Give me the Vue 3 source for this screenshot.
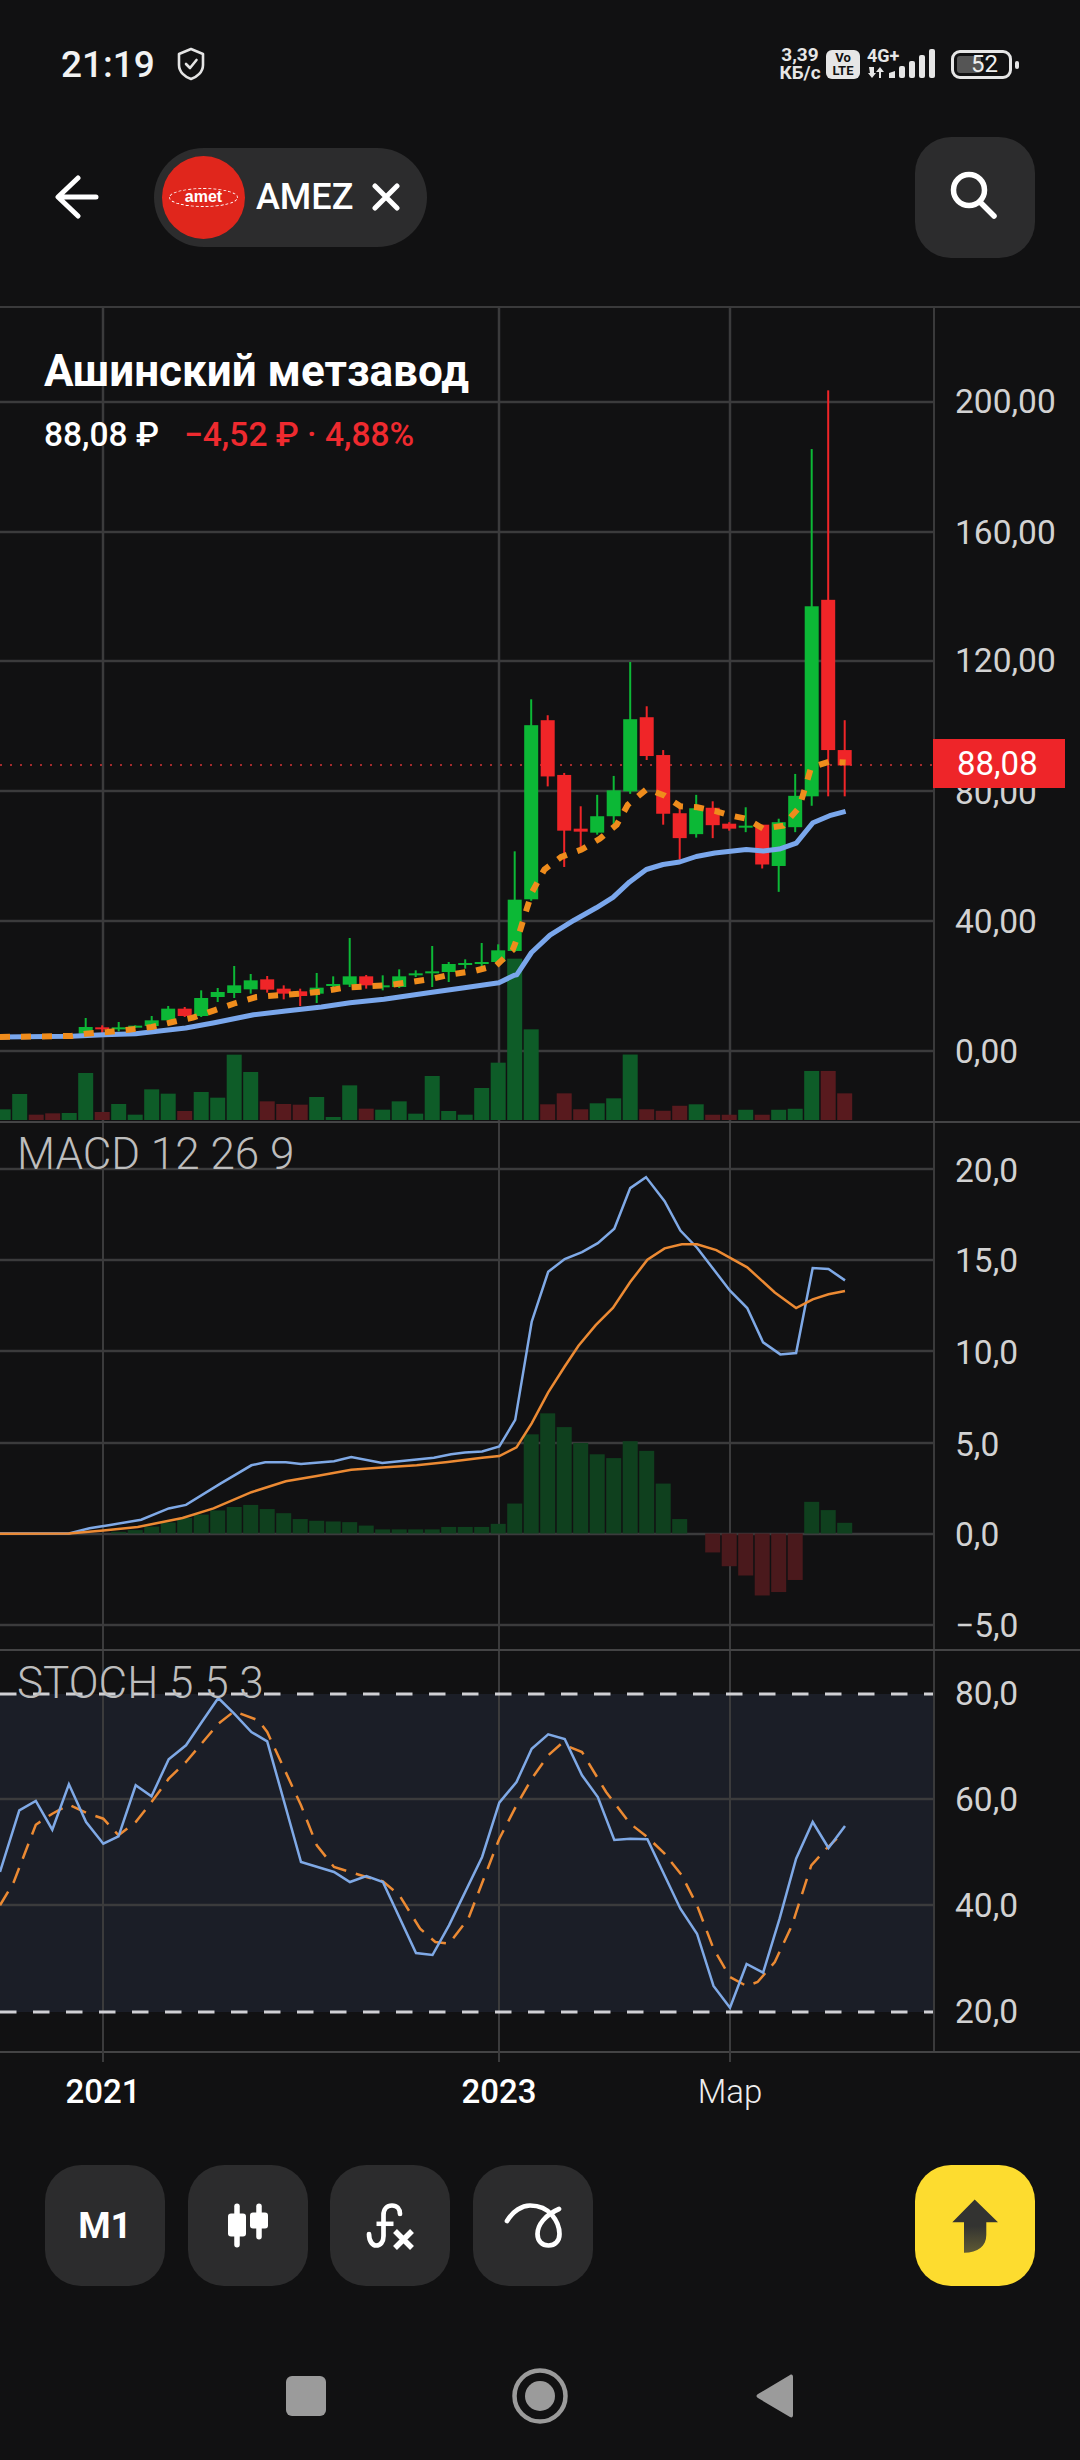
<script setup>
// values were read off the chart, so everything here is in page pixels
const xAt = i => 85.7 + 16.5 * i

// i, up, high, top, bottom, low (first part of the series)
const rawA = [
  [0,1,1128,1155,1175,1185],[1,0,1150,1156,1160,1175],[2,1,1140,1156,1160,1168],[3,1,1150,1151,1155,1158],
  [4,1,1122,1135,1152,1165],[5,1,1092,1100,1135,1148],[6,0,1095,1100,1122,1125],[7,1,1045,1068,1122,1125],
  [8,1,1038,1050,1065,1080],[9,1,972,1030,1053,1068],[10,1,996,1015,1042,1055],[11,0,1002,1012,1043,1052],
  [12,0,1030,1040,1055,1072],[13,0,1040,1048,1062,1092],[14,1,993,1037,1055,1083],[15,1,1003,1026,1032,1043],
  [16,1,888,1003,1028,1035],[17,0,999,1003,1030,1040],[18,1,1000,1030,1034,1045],[19,1,982,1003,1035,1038],
  [20,1,985,994,998,1005],[21,1,912,988,994,1035],[22,1,960,966,990,1020],[23,1,952,963,967,980],
  [24,1,903,960,964,980],[25,1,907,925,960,962],[26,1,628,773,927,930]
].map(c => [c[0], c[1], ...c.slice(2).map(y => 640 + y / 3)])

const rawB = [
  [27,1,678,730,1080,1083],[28,0,710,720,833,853],[29,0,826,830,942,1015],[30,0,893,938,944,975],
  [31,1,870,913,946,950],[32,1,832,861,913,930],[33,1,603,718,863,868],[34,0,692,714,792,800],
  [35,0,780,790,908,930],[36,0,895,907,957,1000],[37,1,870,897,949,956],[38,0,883,896,931,957],
  [39,0,925,928,938,942],[40,1,895,932,936,945],[41,0,930,930,1010,1018],[42,1,918,925,1013,1065],
  [43,1,828,872,935,945],[44,1,175,491,873,892],[45,0,57,478,780,873],[46,0,720,780,811,873]
].map(c => [c[0], c[1], ...c.slice(2).map(y => 360 + y / 2.01)])

const candles = [...rawA, ...rawB].map(([i, up, high, top, bottom, low]) => ({
  i, x: xAt(i), up, high, top, h: Math.max(bottom - top, 2), low
}))

const volumeA = [[1402,1],[1356,1],[1418,0],[1414,0],[1413,1],[1293,1],[1410,0],[1386,1],[1418,1],[1342,1],[1355,1],[1407,0],
  [1350,1],[1367,1],[1238,1],[1290,1],[1378,0],[1386,0],[1388,0],[1365,1],[1425,1],[1330,1],[1400,0],[1403,1],[1378,1],
  [1415,1],[1302,1],[1407,1],[1418,1],[1338,1],[1262,1],[950,1],[1162,1]]
const volumeB = [[1492,0],[1470,0],[1502,0],[1490,1],[1480,1],[1392,1],[1502,0],[1505,0],[1495,0],[1492,1],[1513,0],[1513,0],
  [1503,1],[1513,0],[1503,1],[1501,1],[1425,1],[1425,0],[1470,0]]
const volumes = [
  ...volumeA.map(([y, up], n) => ({ x: xAt(n - 5), y: 640 + y / 3, up })),
  ...volumeB.map(([y, up], n) => ({ x: xAt(n + 28), y: 360 + y / 2.01, up }))
]

const toPoints = (list, fx, fy) => list.map(([x, y]) => `${(fx(x)).toFixed(1)},${(fy(y)).toFixed(1)}`).join(' ')
const ax = x => x / 2.8, ay = y => 640 + y / 3
const bx = x => 500 + x / 2.7, by = y => 360 + y / 2.01
const mx = x => x / 1.452, my = y => 1120 + y / 2.904
const sx = x => x / 1.452, sy = y => 1640 + y / 3

const maLine = toPoints([[0,1185],[200,1183],[290,1178],[380,1175],[440,1168],[520,1158],[600,1142],[710,1118],[800,1107],[900,1095],[980,1082],[1075,1072],[1200,1052],[1300,1037],[1397,1022],[1440,1000]], ax, ay)
  + ' ' + toPoints([[45,1232],[85,1187],[135,1152],[200,1122],[260,1097],[305,1076],[350,1045],[395,1020],[440,1010],[485,1005],[530,994],[580,987],[665,980],[711,983],[754,979],[800,967],[845,926],[890,912],[933,903]], bx, by)
const emaLine = toPoints([[0,1185],[200,1182],[240,1175],[300,1170],[360,1163],[425,1155],[483,1140],[540,1127],[600,1105],[660,1083],[718,1065],[780,1060],[843,1055],[905,1048],[965,1037],[1027,1033],[1085,1030],[1150,1020],[1210,1010],[1265,997],[1328,987],[1390,970],[1435,925],[1455,870],[1475,800]], ax, ay)
  + ' ' + toPoints([[87,1065],[120,1020],[165,995],[220,980],[270,958],[315,930],[345,890],[397,858],[445,872],[487,893],[533,895],[580,902],[625,912],[665,918],[711,938],[765,932],[808,895],[840,815],[890,803],[933,805]], bx, by)

const macdBlue = toPoints([[0,1195],[100,1195],[130,1180],[160,1170],[205,1155],[245,1122],[270,1112],[320,1050],[365,997],[385,988],[415,988],[437,993],[485,985],[510,973],[555,990],[605,980],[630,975],[655,965],[675,960],[700,957],[725,942],[748,865],[772,580],[796,435],[820,398],[845,378],[868,352],[892,310],[915,192],[938,160],[965,230],[988,315],[1012,365],[1060,490],[1085,540],[1108,640],[1133,675],[1156,671],[1180,424],[1203,427],[1227,460]], mx, my)
const macdOrange = toPoints([[0,1196],[100,1195],[150,1186],[200,1176],[265,1150],[310,1122],[365,1075],[415,1043],[460,1028],[510,1010],[555,1003],[605,997],[650,987],[700,975],[725,970],[750,945],[772,875],[796,785],[820,710],[840,650],[865,590],[890,540],[915,465],[940,400],[965,367],[990,355],[1012,355],[1040,372],[1085,422],[1125,495],[1156,540],[1180,515],[1203,500],[1227,491]], mx, my)
const histZero = my(1195)
const hist = [1190,1185,1175,1163,1150,1140,1128,1118,1112,1124,1136,1153,1158,1160,1162,1172,1183,1183,1183,1183,1176,1176,1176,1167,1108,907,846,886,932,965,976,927,955,1050,1153,1195,1250,1290,1317,1375,1365,1330,1103,1127,1164]
  .map((y, n) => ({ x: xAt(n + 2), top: Math.min(my(y), histZero), h: Math.abs(my(y) - histZero), up: y <= 1195 }))

const stochBlue = toPoints([[0,690],[28,505],[52,477],[76,563],[100,427],[125,540],[150,605],[172,583],[197,430],[220,463],[245,352],[270,310],[293,240],[317,168],[340,215],[365,270],[388,298],[437,660],[485,690],[508,720],[532,702],[556,720],[604,933],[628,939],[652,850],[700,645],[725,482],[750,420],[772,320],[796,277],[820,291],[845,400],[868,465],[892,594],[915,590],[940,592],[988,800],[1012,875],[1036,1032],[1060,1097],[1084,966],[1108,992],[1132,830],[1156,650],[1180,540],[1203,618],[1227,552]], sx, sy)
const stochOrange = toPoints([[0,790],[20,720],[52,548],[76,515],[100,488],[125,512],[150,530],[172,580],[197,540],[220,480],[245,410],[270,360],[317,245],[340,208],[375,235],[388,270],[437,490],[460,610],[485,675],[532,705],[556,718],[580,760],[610,860],[632,900],[652,905],[680,830],[725,590],[750,490],[772,410],[796,340],[815,305],[845,330],[880,450],[915,545],[940,585],[965,635],[990,700],[1012,790],[1036,920],[1060,1005],[1084,1032],[1100,1020],[1125,960],[1150,850],[1178,670],[1200,620],[1215,590]], sx, sy)

const vLines = [103, 499, 730]

const mainGrid = [400, 530, 659, 789, 919, 1049]
const macdGrid = [1167, 1258, 1349, 1441, 1532, 1623]
const stochGrid = [1797, 1903]

const mainLabels = [['200,00', 402], ['160,00', 533], ['120,00', 661], ['80,00', 793], ['40,00', 922], ['0,00', 1052]]
  .map(([t, y]) => ({ t, top: y - 306 - 22 }))
const macdLabels = [['20,0', 1172], ['15,0', 1262], ['10,0', 1354], ['5,0', 1446], ['0,0', 1536], ['−5,0', 1627]]
  .map(([t, y]) => ({ t, top: y - 1121 - 23 }))
const stochLabels = [['80,0', 1695], ['60,0', 1801], ['40,0', 1907], ['20,0', 2013]]
  .map(([t, y]) => ({ t, top: y - 1649 - 23 }))

const xLabels = [
  { t: '2021', x: 103, cls: 'bold' },
  { t: '2023', x: 499, cls: 'bold' },
  { t: 'Мар', x: 730, cls: '' }
]
</script>

<template>
  <div class="screen">
    <!-- status bar -->
    <div class="status">
      <div class="status-left">
        <span class="time">21:19</span>
        <svg class="shield" width="28" height="34" viewBox="0 0 28 34" fill="none" stroke="#e4e4e4" stroke-width="2.6" stroke-linejoin="round" stroke-linecap="round">
          <path d="M14 2 L26 7 V18 C26 25 20 30 14 32 C8 30 2 25 2 18 V7 Z" />
          <path d="M9 17 L13 21 L19.500 13" />
        </svg>
      </div>
      <div class="status-right">
        <div class="speed"><span>3,39</span><span>КБ/с</span></div>
        <div class="volte"><span>Vo</span><span>LTE</span></div>
        <svg class="net" width="69" height="30" viewBox="0 0 69 30">
          <text x="0" y="13" class="net-text">4G+</text>
          <path d="M2 18 H7 V24 H9 L5 29 L1 24 H3 Z M12 29 H14 V23 H17 L13 18 L9 23 H12 Z" fill="#e6e6e6" />
          <path d="M22 29 V24 L28 22 V29 Z" fill="#e6e6e6" />
          <rect x="32" y="17" width="6" height="12" rx="2" fill="#e6e6e6" />
          <rect x="42" y="12" width="6" height="17" rx="2" fill="#e6e6e6" />
          <rect x="52" y="6" width="6" height="23" rx="2" fill="#e6e6e6" />
          <rect x="62" y="0" width="6" height="29" rx="2" fill="#e6e6e6" />
        </svg>
        <div class="battery">
          <div class="battery-fill"></div>
          <span>52</span>
        </div>
      </div>
    </div>

    <!-- top bar -->
    <div class="topbar">
      <svg class="back" width="44" height="44" viewBox="0 0 44 44" fill="none" stroke="#fff" stroke-width="5" stroke-linecap="round" stroke-linejoin="round">
        <path d="M41 22 H4 M23 3 L3 22 L23 41" />
      </svg>
      <div class="pill">
        <div class="logo">
          <span class="logo-oval">amet</span>
        </div>
        <span class="ticker">AMEZ</span>
        <svg width="28" height="28" viewBox="0 0 28 28" fill="none" stroke="#fff" stroke-width="5" stroke-linecap="round">
          <path d="M3 3 L25 25 M25 3 L3 25" />
        </svg>
      </div>
      <div class="icon-btn search">
        <svg width="60" height="60" viewBox="0 0 60 60" fill="none" stroke="#fff" stroke-width="5.500" stroke-linecap="round">
          <circle cx="24" cy="23" r="15.500" />
          <path d="M35 35 L49 49" />
        </svg>
      </div>
    </div>

    <!-- chart -->
    <div class="chart">
      <div class="pane pane-main">
        <svg class="plot" width="933" height="815" viewBox="0 306 933 815">
          <line v-for="y in mainGrid" :key="y" x1="0" x2="933" :y1="y" :y2="y" class="grid" />
          <line v-for="x in vLines" :key="x" :x1="x" :x2="x" y1="306" y2="1121" class="grid" />
          <rect v-for="v in volumes" :key="v.x" :x="v.x - 7.500" :y="v.y" width="15" :height="1118 - v.y" :fill="v.up ? '#0e5c28' : '#581a1e'" />
          <line x1="0" x2="933" y1="763" y2="763" class="price-dots" />
          <g v-for="c in candles" :key="c.i" :fill="c.up ? '#0cb836' : '#f02528'">
            <rect :x="c.x - 1" :y="c.high" width="2" :height="c.low - c.high" />
            <rect :x="c.x - 7" :y="c.top" width="14" :height="c.h" />
          </g>
          <polyline :points="maLine" class="ma" />
          <polyline :points="emaLine" class="ema" />
        </svg>
        <div class="axis">
          <span v-for="l in mainLabels" :key="l.t" class="axis-label" :style="{ top: l.top + 'px' }">{{ l.t }}</span>
          <div class="price-tag">88,08</div>
        </div>
        <div class="legend">
          <div class="legend-name">Ашинский метзавод</div>
          <div class="legend-price">
            <span>88,08 ₽</span>
            <span class="legend-change">−4,52 ₽ · 4,88%</span>
          </div>
        </div>
      </div>

      <div class="pane pane-macd">
        <svg class="plot" width="933" height="528" viewBox="0 1121 933 528">
          <line v-for="y in macdGrid" :key="y" x1="0" x2="933" :y1="y" :y2="y" class="grid" />
          <line v-for="x in vLines" :key="x" :x1="x" :x2="x" y1="1121" y2="1649" class="grid-thin" />
          <rect v-for="b in hist" :key="b.x" :x="b.x - 7.500" :y="b.top" width="15" :height="b.h" :fill="b.up ? '#0f401e' : '#4a191c'" />
          <polyline :points="macdBlue" class="thin blue" />
          <polyline :points="macdOrange" class="thin orange" />
        </svg>
        <div class="axis">
          <span v-for="l in macdLabels" :key="l.t" class="axis-label" :style="{ top: l.top + 'px' }">{{ l.t }}</span>
        </div>
        <div class="pane-title">MACD 12 26 9</div>
      </div>

      <div class="pane pane-stoch">
        <svg class="plot" width="933" height="404" viewBox="0 1649 933 404">
          <rect x="0" y="1692" width="933" height="318" fill="#1b1e27" />
          <line v-for="y in stochGrid" :key="y" x1="0" x2="933" :y1="y" :y2="y" class="grid" />
          <line v-for="x in vLines" :key="x" :x1="x" :x2="x" y1="1649" y2="2053" class="grid-thin" />
          <line x1="0" x2="933" y1="1692" y2="1692" class="limit" />
          <line x1="0" x2="933" y1="2010" y2="2010" class="limit" />
          <polyline :points="stochOrange" class="thin orange dashed" />
          <polyline :points="stochBlue" class="thin blue" />
        </svg>
        <div class="axis">
          <span v-for="l in stochLabels" :key="l.t" class="axis-label" :style="{ top: l.top + 'px' }">{{ l.t }}</span>
        </div>
        <div class="pane-title stoch-title">STOCH 5 5 3</div>
      </div>

      <div class="time-axis">
        <template v-for="l in xLabels" :key="l.t">
          <i class="tick" :style="{ left: l.x - 1 + 'px' }"></i>
          <span class="time-label" :class="l.cls" :style="{ left: l.x + 'px' }">{{ l.t }}</span>
        </template>
      </div>
    </div>

    <!-- bottom toolbar -->
    <div class="toolbar">
      <div class="icon-btn m1">M1</div>
      <div class="icon-btn">
        <svg width="44" height="48" viewBox="0 0 44 48" fill="#fff">
          <rect x="8.250" y="1.500" width="5.500" height="44" rx="2.750" />
          <rect x="2" y="11.500" width="18" height="23" rx="3" />
          <rect x="30.250" y="1.500" width="5.500" height="36" rx="2.750" />
          <rect x="24" y="10.500" width="18" height="16" rx="3" />
        </svg>
      </div>
      <div class="icon-btn">
        <svg width="50" height="50" viewBox="0 0 50 50" fill="none" stroke="#fff" stroke-linecap="round">
          <path d="M4 33 C4 41 8 44.500 11 44.500 C15.500 44.500 18.500 41 18.500 35 V14 C18.500 8 22 4.500 27 4.500 C32 4.500 35 8 35 13" stroke-width="4.700" />
          <path d="M11.500 22.800 H28.500" stroke-width="4.500" stroke-linecap="butt" />
          <path d="M30 30 L47 47 M47 30 L30 47" stroke-width="5.500" stroke-linecap="butt" />
        </svg>
      </div>
      <div class="icon-btn">
        <svg width="60" height="50" viewBox="0 0 60 50" fill="none" stroke="#fff" stroke-width="4.700" stroke-linecap="round">
          <path d="M4 20 C10 10 19 4.500 27 4.500 C37 4.500 44 8 49 14 C54 20 56.500 27 56.500 33 C56.500 40 52 44.500 45.500 44.500 C39 44.500 34.500 40 34.500 33 C34.500 24 42 14 56 8" />
        </svg>
      </div>
      <div class="icon-btn yellow">
        <svg width="50" height="56" viewBox="0 0 50 56">
          <defs>
            <linearGradient id="upArrow" x1="0" y1="0" x2="0" y2="1">
              <stop offset="0.5" stop-color="#333331" />
              <stop offset="1" stop-color="#5f5a35" />
            </linearGradient>
          </defs>
          <path d="M24.700 1.500 L48 24.200 H36.300 V37 C36.300 48 28 54.800 14 54.800 V24.200 H2.300 Z" fill="url(#upArrow)" />
        </svg>
      </div>
    </div>

    <!-- android nav -->
    <div class="nav">
      <div class="nav-square"></div>
      <svg width="56" height="56" viewBox="0 0 56 56">
        <circle cx="28" cy="28" r="25.500" fill="none" stroke="#9b9b9b" stroke-width="4.500" />
        <circle cx="28" cy="28" r="15" fill="#9b9b9b" />
      </svg>
      <svg width="38" height="46" viewBox="0 0 38 46">
        <path d="M34 2 C36 1 37 2 37 4 V42 C37 44 36 45 34 44 L2 25 C0 24 0 22 2 21 Z" fill="#9b9b9b" />
      </svg>
    </div>
  </div>
</template>

<style>
html, body {
  margin: 0;
  background: #111112;
}
</style>

<style scoped>
.screen {
  width: 1080px;
  height: 2460px;
  background: #111112;
  color: #fff;
  font-family: Roboto, "Noto Sans", sans-serif;
  display: flex;
  flex-direction: column;
  overflow: hidden;
}

.status {
  height: 123px;
  padding: 5px 62px 0 61px;
  display: flex;
  justify-content: space-between;
  align-items: center;
  box-sizing: border-box;
}
.status-left {
  display: flex;
  align-items: center;
  gap: 22px;
}
.time {
  font-size: 37px;
  font-weight: 500;
  color: #f2f2f2;
}
.status-right {
  display: flex;
  align-items: center;
}
.speed {
  display: flex;
  flex-direction: column;
  font-size: 19px;
  font-weight: 700;
  line-height: 18px;
  color: #e6e6e6;
  width: 42px;
  align-items: center;
}
.volte {
  margin-left: 5px;
  width: 34px;
  height: 29px;
  border-radius: 6px;
  background: #e6e6e6;
  color: #111;
  font-size: 13px;
  font-weight: 700;
  line-height: 13px;
  display: flex;
  flex-direction: column;
  align-items: center;
  justify-content: center;
}
.net {
  margin-left: 7px;
  overflow: visible;
}
.net-text {
  font-size: 18px;
  font-weight: 700;
  fill: #e6e6e6;
}
.battery {
  position: relative;
  margin-left: 15px;
  margin-right: 6px;
  width: 61px;
  height: 29px;
  box-sizing: border-box;
  border: 3px solid #e6e6e6;
  border-radius: 9px;
  display: flex;
  align-items: center;
  justify-content: center;
  font-size: 24px;
  color: #eee;
}
.battery span {
  position: relative;
  margin-left: 6px;
}
.battery-fill {
  position: absolute;
  left: 3px;
  top: 3px;
  bottom: 3px;
  width: 24px;
  background: #555;
  border-radius: 3px;
}
.battery::after {
  content: "";
  position: absolute;
  right: -10px;
  top: 8px;
  width: 4px;
  height: 8px;
  border-radius: 2px;
  background: #e6e6e6;
}

.topbar {
  height: 130px;
  padding: 9px 45px 44px 55px;
  display: flex;
  align-items: center;
  box-sizing: content-box;
}
.pill {
  margin-left: 55px;
  height: 99px;
  width: 273px;
  box-sizing: border-box;
  padding: 0 27px 0 8px;
  border-radius: 50px;
  background: #2c2c2d;
  display: flex;
  align-items: center;
}
.logo {
  width: 83px;
  height: 83px;
  border-radius: 50%;
  background: #e0261c;
  display: flex;
  align-items: center;
  justify-content: center;
  flex-shrink: 0;
}
.logo-oval {
  width: 69px;
  height: 19px;
  box-sizing: border-box;
  border: 1px dashed #fff;
  border-radius: 50%;
  font-family: "Liberation Sans", sans-serif;
  font-size: 16px;
  font-weight: 700;
  line-height: 16px;
  text-align: center;
  color: #fff;
}
.ticker {
  margin: 0 auto 0 11px;
  font-size: 36px;
  font-weight: 500;
  color: #fff;
}
.icon-btn {
  width: 120px;
  height: 121px;
  border-radius: 36px;
  background: #2c2c2d;
  display: flex;
  align-items: center;
  justify-content: center;
  flex-shrink: 0;
}
.search {
  margin-left: auto;
}

.chart {
  display: flex;
  flex-direction: column;
}
.pane {
  position: relative;
  display: flex;
  border-top: 2px solid #3a3a3b;
  box-sizing: border-box;
}
.pane-main {
  height: 815px;
}
.pane-macd {
  height: 528px;
  border-top-color: #444445;
}
.pane-stoch {
  height: 404px;
  border-top-color: #444445;
  border-bottom: 2px solid #444445;
}
.plot {
  display: block;
  flex-shrink: 0;
}
.grid {
  stroke: #3b3b3c;
  stroke-width: 2.500;
}
.grid-thin {
  stroke: #3b3b3c;
  stroke-width: 2;
}
.price-dots {
  stroke: #a52a2d;
  stroke-width: 2;
  stroke-dasharray: 2 8;
}
.ma {
  fill: none;
  stroke: #7aa7ec;
  stroke-width: 5;
  stroke-linejoin: round;
}
.ema {
  fill: none;
  stroke: #ef8c1c;
  stroke-width: 6;
  stroke-dasharray: 10 11;
}
.thin {
  fill: none;
  stroke-width: 2.500;
}
.blue {
  stroke: #7fa9e6;
}
.orange {
  stroke: #ec8a33;
}
.dashed {
  stroke-dasharray: 16 10;
}
.limit {
  stroke: #d0d0d4;
  stroke-width: 3;
  stroke-dasharray: 16.500 16.500;
}

.axis {
  position: relative;
  flex: 1;
  border-left: 2px solid #3a3a3b;
}
.axis-label {
  position: absolute;
  left: 20px;
  height: 40px;
  line-height: 40px;
  font-size: 33.500px;
  color: #d2d2d2;
}
.price-tag {
  position: absolute;
  left: -2px;
  top: 431px;
  width: 132px;
  height: 49px;
  padding-left: 24px;
  box-sizing: border-box;
  background: #ee2529;
  color: #fff;
  font-size: 33px;
  line-height: 50px;
}

.legend {
  position: absolute;
  left: 44px;
  top: 37px;
}
.legend-name {
  font-size: 44px;
  font-weight: 700;
  line-height: 52px;
}
.legend-price {
  display: flex;
  gap: 25px;
  margin-top: 18px;
  font-size: 33.500px;
  font-weight: 500;
  line-height: 40px;
}
.legend-change {
  color: #ee2a2f;
}
.pane-title {
  position: absolute;
  left: 17px;
  top: 6px;
  font-size: 44px;
  font-weight: 300;
  line-height: 50px;
  color: #bdbdbd;
}
.stoch-title {
  top: 7px;
}

.time-axis {
  position: relative;
  height: 112px;
}
.tick {
  position: absolute;
  top: 0;
  width: 2px;
  height: 9px;
  background: #3b3b3c;
}
.time-label {
  position: absolute;
  top: 17px;
  transform: translateX(-50%);
  font-size: 33px;
  font-weight: 300;
  line-height: 44px;
  color: #eee;
}
.time-label.bold {
  font-weight: 500;
  color: #fff;
}

.toolbar {
  display: flex;
  gap: 22.500px;
  padding: 0 45px;
}
.toolbar .yellow {
  margin-left: auto;
  background: #fddc2f;
}
.m1 {
  font-size: 37px;
  font-weight: 700;
}

.nav {
  display: flex;
  align-items: center;
  padding: 82px 0 0 286px;
}
.nav-square {
  width: 40px;
  height: 40px;
  border-radius: 6px;
  background: #9b9b9b;
}
.nav svg:nth-child(2) {
  margin-left: 186px;
}
.nav svg:nth-child(3) {
  margin-left: 188px;
}
</style>
